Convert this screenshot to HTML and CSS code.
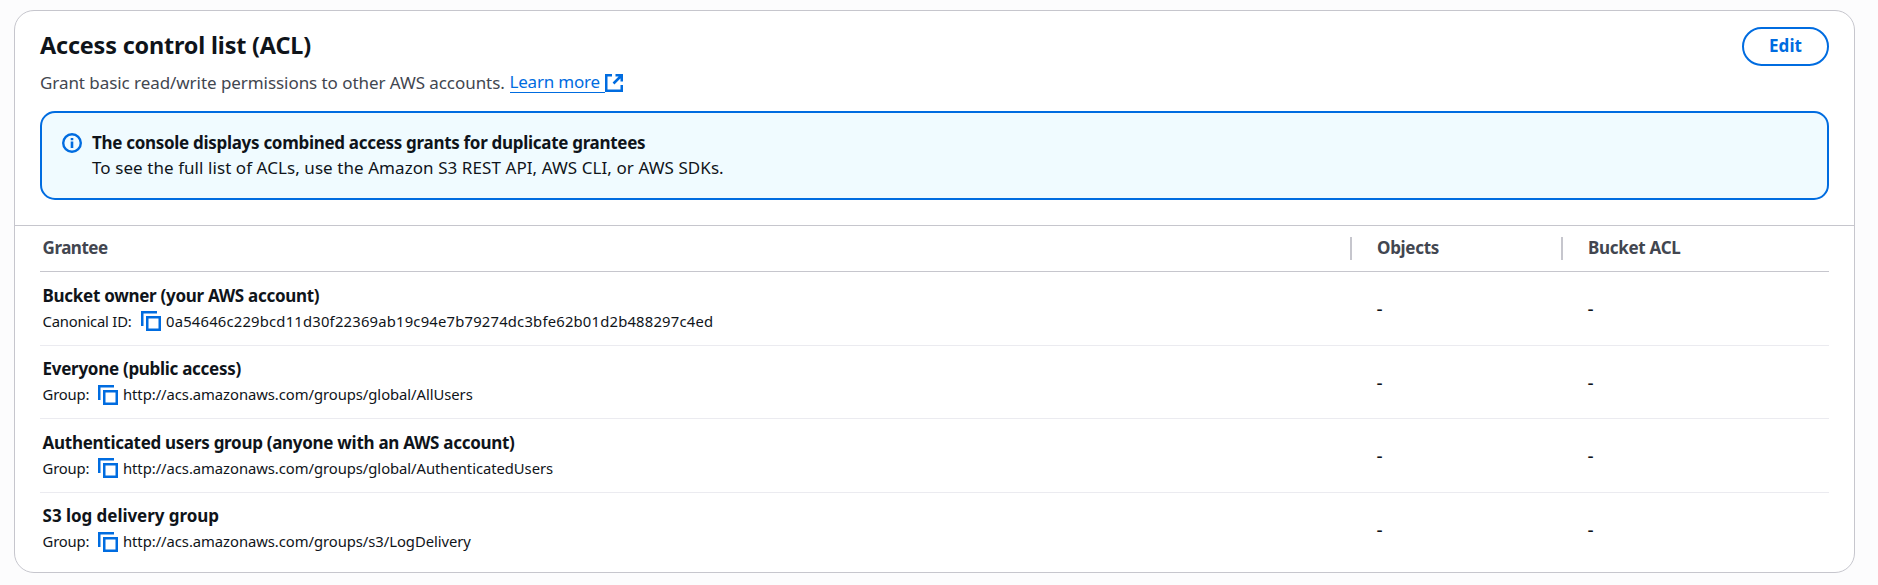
FILE: index.html
```html
<!DOCTYPE html>
<html lang="en">
<head>
<meta charset="utf-8">
<title>Access control list (ACL)</title>
<link rel="stylesheet" href="styles.css">
</head>
<body>
<svg class="sprite" aria-hidden="true">
  <symbol id="copy" viewBox="0 0 20 20">
    <path d="M1.25 15V1.25H16M6.25 6.25h12.5v12.5H6.25z"/>
  </symbol>
</svg>
<section class="panel">
  <header class="panel-header">
    <div class="heading-row">
      <div class="heading">
        <h2 class="title"><span>Access control list (ACL)</span></h2>
        <p class="description"><span class="lead">Grant basic read/write permissions to other AWS accounts.</span><a class="link" href="#">Learn more</a><svg class="external" viewBox="0 0 18 18"><path d="M7 1.25H1.25v15.5h15.5V11M10.5 1.25h6.25V7.5M16.5 1.5L8.5 9.5"/></svg></p>
      </div>
      <button class="button"><span>Edit</span></button>
    </div>
    <div class="alert">
      <svg class="info" viewBox="0 0 20 20"><circle cx="10" cy="10" r="8.8"/><path class="info-mark" d="M10 8.6V15M10 5v2.3"/></svg>
      <div class="alert-body">
        <div class="alert-title"><span>The console displays combined access grants for duplicate grantees</span></div>
        <div class="alert-text"><span>To see the full list of ACLs, use the Amazon S3 REST API, AWS CLI, or AWS SDKs.</span></div>
      </div>
    </div>
  </header>
  <div class="table">
    <div class="row head">
      <div class="cell grantee"><span>Grantee</span></div>
      <div class="cell divided"><span>Objects</span></div>
      <div class="cell divided"><span>Bucket ACL</span></div>
    </div>
    <div class="row">
      <div class="cell">
        <div class="name"><span>Bucket owner (your AWS account)</span></div>
        <div class="detail"><span class="label">Canonical ID:</span><svg class="copy"><use href="#copy"/></svg><span class="value hash">0a54646c229bcd11d30f22369ab19c94e7b79274dc3bfe62b01d2b488297c4ed</span></div>
      </div>
      <div class="cell dash">-</div><div class="cell dash">-</div>
    </div>
    <div class="row">
      <div class="cell">
        <div class="name"><span>Everyone (public access)</span></div>
        <div class="detail"><span class="label short">Group:</span><svg class="copy"><use href="#copy"/></svg><span class="value">http://acs.amazonaws.com/groups/global/AllUsers</span></div>
      </div>
      <div class="cell dash">-</div><div class="cell dash">-</div>
    </div>
    <div class="row">
      <div class="cell">
        <div class="name"><span>Authenticated users group (anyone with an AWS account)</span></div>
        <div class="detail"><span class="label short">Group:</span><svg class="copy"><use href="#copy"/></svg><span class="value">http://acs.amazonaws.com/groups/global/AuthenticatedUsers</span></div>
      </div>
      <div class="cell dash">-</div><div class="cell dash">-</div>
    </div>
    <div class="row">
      <div class="cell">
        <div class="name loose"><span>S3 log delivery group</span></div>
        <div class="detail"><span class="label short">Group:</span><svg class="copy"><use href="#copy"/></svg><span class="value">http://acs.amazonaws.com/groups/s3/LogDelivery</span></div>
      </div>
      <div class="cell dash">-</div><div class="cell dash">-</div>
    </div>
  </div>
</section>
</body>
</html>
```
FILE: styles.css
```css
* { box-sizing: border-box; }
body {
  margin: 0;
  padding: 10px 23px 0 14px;
  background: #fcfcfd;
  color: #0f141a;
  font-family: "Noto Sans", "Open Sans", sans-serif;
  font-size: 17px;
  white-space: nowrap;
}
svg { display: block; flex: none; fill: none; stroke: #006ce0; stroke-width: 2.5; }
.sprite { position: absolute; width: 0; height: 0; }
.panel {
  height: 563px;
  background: #fff;
  border: 1px solid #c6c6cd;
  border-radius: 20px;
}
.panel-header {
  height: 215px;
  padding: 16px 25px 0;
  border-bottom: 1px solid #c6c6cd;
}
.heading-row { display: flex; justify-content: space-between; height: 84px; }
.title { margin: 3px 0 0; font-size: 23.4px; line-height: 30px; font-weight: 700; letter-spacing: -0.17px; }
.description { display: flex; align-items: center; margin: 9px 0 0; height: 25px; line-height: 27px; color: #424650; letter-spacing: -0.06px; }
.lead { width: 469.5px; padding-top: 2px; }
.link { width: 95px; height: 22px; margin-top: 1px; line-height: 22px; color: #006ce0; letter-spacing: -0.2px; text-decoration: none; border-bottom: 1px solid #006ce0; }
.external { width: 18px; height: 18px; margin: 2px 0 0 0; }
.button {
  width: 87px;
  height: 39px;
  padding: 0 0 1px;
  border: 2px solid #006ce0;
  border-radius: 20px;
  background: #fff;
  color: #006ce0;
  font: 700 17px/32px "Noto Sans", sans-serif;
  letter-spacing: 0.1px;
}
.alert {
  display: flex;
  height: 89px;
  padding: 18px 20px;
  gap: 10px;
  border: 2px solid #006ce0;
  border-radius: 15px;
  background: #f0fbff;
}
.info { width: 20px; height: 20px; margin-top: 2px; stroke-width: 2.4; }
.info-mark { stroke-width: 2.6; }
.alert-title, .alert-text { line-height: 24px; }
.alert-title { font-weight: 700; letter-spacing: -0.3px; }
.alert-text { letter-spacing: 0.07px; line-height: 25px; }
.table { padding: 0 25px; }
.row {
  display: grid;
  grid-template-columns: 1311px 211px 1fr;
  height: 73.5px;
  padding-left: 2.6px;
  border-bottom: 1px solid #ebebf0;
}
.row:last-child { border-bottom: 0; }
.head { height: 46px; align-items: center; border-bottom-color: #c6c6cd; color: #424650; font-weight: 700; line-height: 24px; letter-spacing: -0.3px; }
.grantee { height: 25px; letter-spacing: -0.5px; }
.divided { height: 23px; padding-left: 25px; border-left: 2px solid #c6c6cd; line-height: 22px; margin-left: -3.6px; }
.name { margin-top: 10.6px; line-height: 26px; font-weight: 700; letter-spacing: -0.29px; }
.loose { letter-spacing: -0.05px; }
.detail { display: flex; align-items: center; height: 25px; font-size: 14.8px; line-height: 25px; letter-spacing: -0.05px; }
.label { width: 98.4px; letter-spacing: -0.2px; }
.short { width: 55.4px; }
.hash { letter-spacing: 0.2px; }
.copy { width: 20px; height: 20px; margin-right: 5px; }
.dash { padding-left: 23px; line-height: 74px; font-size: 19px; }
```
